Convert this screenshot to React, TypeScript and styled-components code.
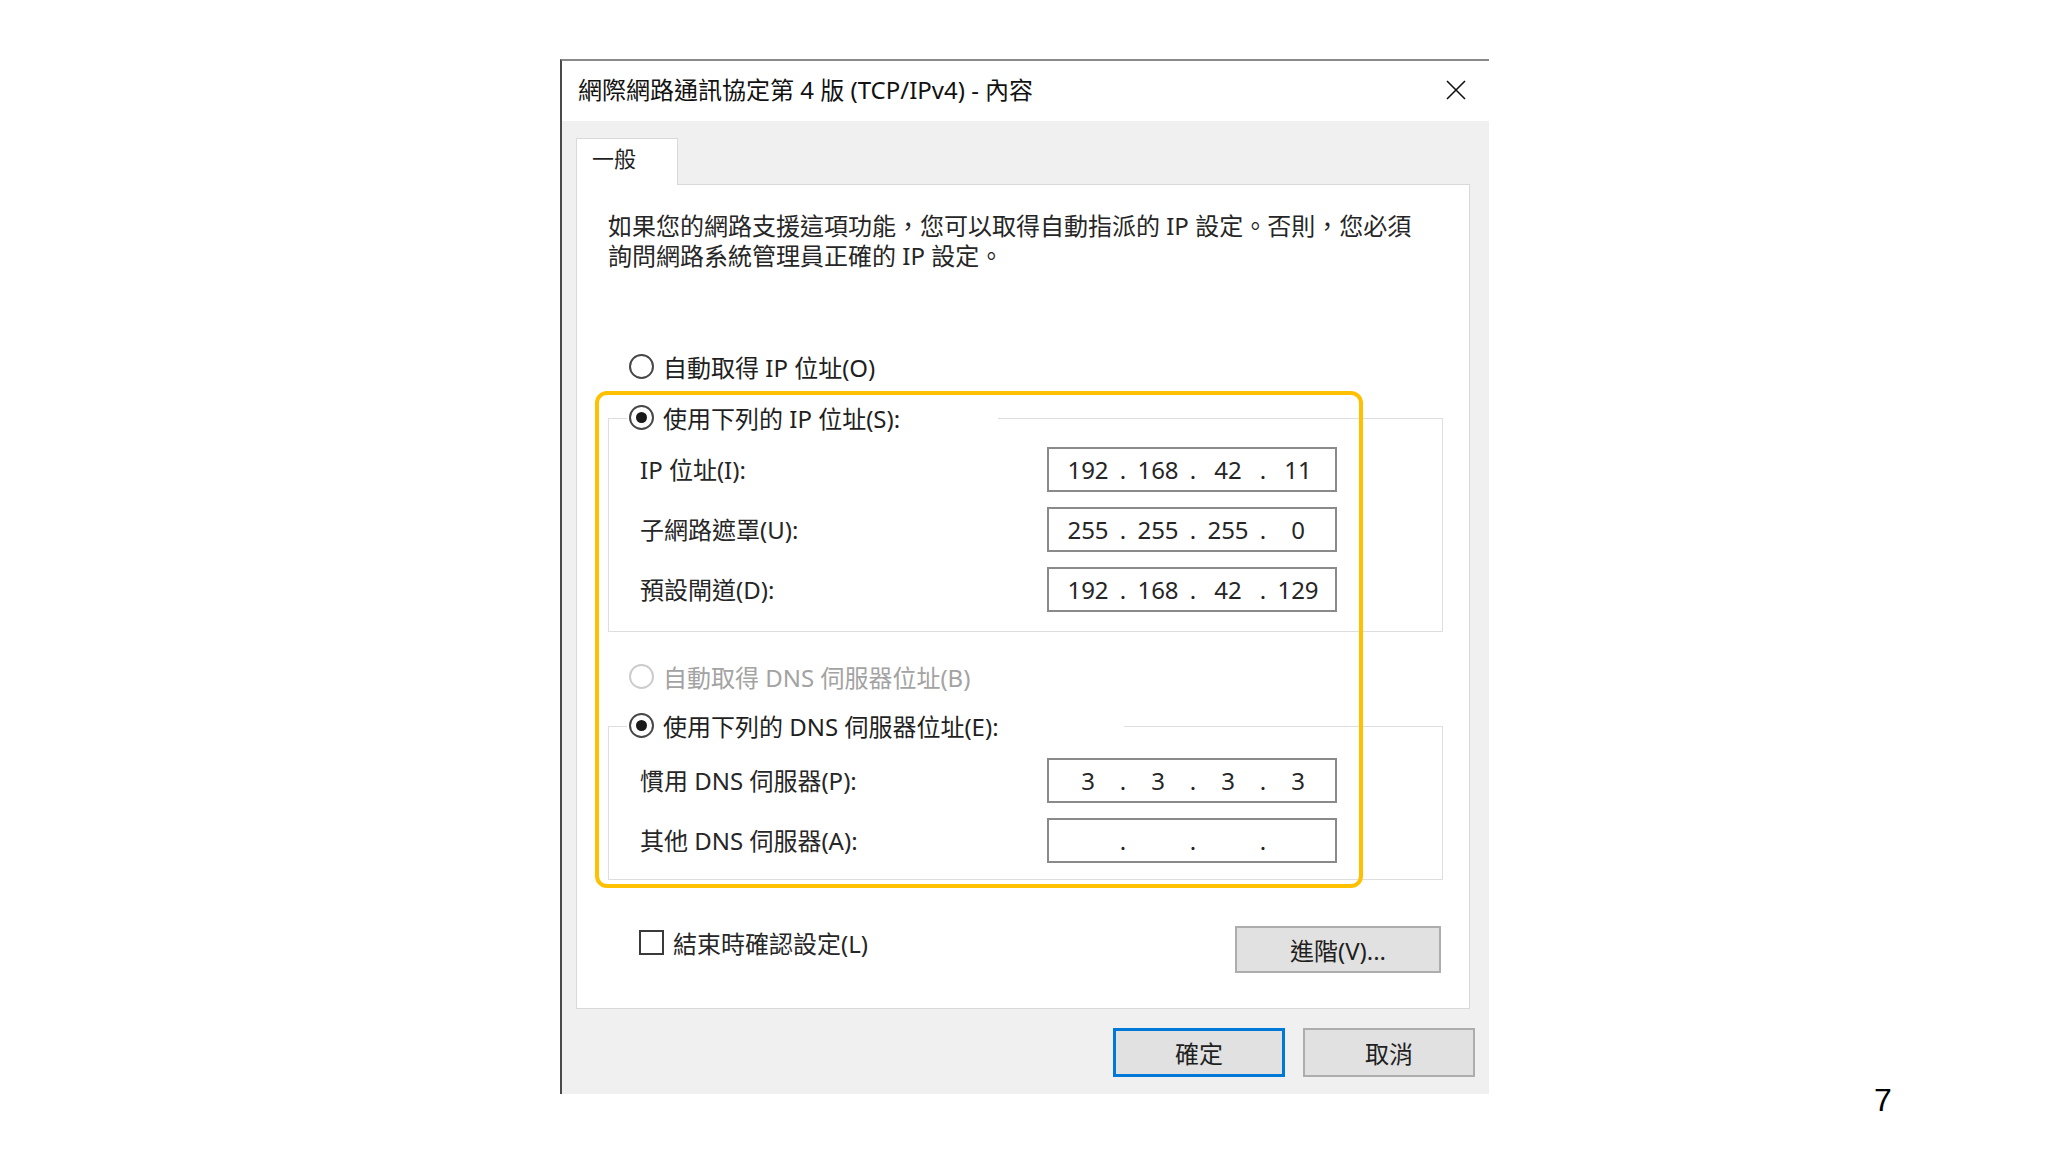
import React from "react";
import styled, { createGlobalStyle } from "styled-components";

const GlobalStyle = createGlobalStyle`
  html, body { margin: 0; padding: 0; background: #ffffff; }
  body { font-family: "Noto Sans", "Noto Sans CJK TC", sans-serif; color: #1f1f1f; }
  * { box-sizing: border-box; }
`;

const Page = styled.div`
  width: 2048px;
  height: 1152px;
  display: flex;
  align-items: flex-start;
  padding: 59px 0 0 560px;
  overflow: hidden;
`;

const Dialog = styled.div`
  width: 929px;
  height: 1035px;
  display: flex;
  flex-direction: column;
  border-top: 2px solid #8a8a8a;
  border-left: 2px solid #4a4a4a;
  background: #f0f0f0;
`;

const TitleBar = styled.div`
  height: 60px;
  flex: none;
  background: #ffffff;
  display: flex;
  align-items: center;
  justify-content: space-between;
  padding: 0 23px 2px 16px;
`;

const Title = styled.div`
  font-size: 24px;
  line-height: 30px;
  color: #111;
`;

const CloseButton = styled.div`
  width: 20px;
  height: 20px;
  display: flex;
`;

const Body = styled.div`
  flex: 1;
  display: flex;
  flex-direction: column;
  padding: 17px 14px 17px 14px;
`;

const TabStrip = styled.div`
  display: flex;
`;

const Tab = styled.div`
  width: 102px;
  height: 47px;
  margin-bottom: -1px;
  background: #ffffff;
  border: 1px solid #d9d9d9;
  border-bottom: none;
  padding: 0 0 10px 15px;
  display: flex;
  align-items: center;
  font-size: 22px;
  color: #1f1f1f;
  position: relative;
  z-index: 1;
`;

const Panel = styled.div`
  flex: 1;
  position: relative;
  background: #ffffff;
  border: 1px solid #d9d9d9;
  margin-right: 5px;
  padding: 26px 0 35px 31px;
  display: flex;
  flex-direction: column;
`;

const Intro = styled.p`
  margin: 0;
  font-size: 24px;
  line-height: 30px;
  color: #262626;
  white-space: nowrap;
`;

const OptionRow = styled.div<{ $top: number; $disabled?: boolean }>`
  display: flex;
  align-items: center;
  gap: 9px;
  height: 30px;
  margin-top: ${(p) => p.$top}px;
  margin-left: 21px;
  font-size: 24px;
  color: ${(p) => (p.$disabled ? "#a3a3a3" : "#1f1f1f")};
`;

const Radio = styled.span<{ $checked?: boolean; $disabled?: boolean }>`
  width: 25px;
  height: 25px;
  flex: none;
  border-radius: 50%;
  border: 2px solid ${(p) => (p.$disabled ? "#cccccc" : "#474747")};
  background: #ffffff;
  display: flex;
  align-items: center;
  justify-content: center;
  &::after {
    content: "";
    width: 11px;
    height: 11px;
    border-radius: 50%;
    background: #1a1a1a;
    display: ${(p) => (p.$checked ? "block" : "none")};
  }
`;

const GroupBox = styled.div<{ $top: number; $bottom: number }>`
  margin-top: ${(p) => p.$top}px;
  margin-right: 26px;
  border: 1px solid #dedede;
  padding: 0 105px ${(p) => p.$bottom}px 31px;
  display: flex;
  flex-direction: column;
`;

const Legend = styled.div<{ $width: number }>`
  width: ${(p) => p.$width}px;
  height: 30px;
  margin-top: -17px;
  margin-left: -13px;
  padding-left: 2px;
  background: #ffffff;
  display: flex;
  align-items: center;
  gap: 9px;
  font-size: 24px;
  color: #1f1f1f;
`;

const FieldGrid = styled.div<{ $top: number }>`
  display: grid;
  grid-template-columns: 1fr 290px;
  row-gap: 15px;
  align-items: center;
  margin-top: ${(p) => p.$top}px;
`;

const FieldLabel = styled.div`
  font-size: 24px;
  line-height: 30px;
  color: #262626;
`;

const IpBox = styled.div`
  height: 45px;
  border: 2px solid #8a8a8a;
  background: #ffffff;
  display: flex;
  align-items: center;
  padding: 0 0 1px 11px;
  font-size: 24px;
  color: #262626;
`;

const Octet = styled.span`
  width: 56px;
  text-align: center;
`;

const Dot = styled.span`
  width: 14px;
  text-align: center;
`;

const BottomRow = styled.div`
  display: flex;
  justify-content: space-between;
  align-items: flex-start;
  margin-top: auto;
  margin-right: 28px;
`;

const CheckRow = styled.label`
  display: flex;
  align-items: center;
  gap: 9px;
  height: 30px;
  margin-top: 1px;
  margin-left: 31px;
  font-size: 24px;
  color: #262626;
`;

const CheckBox = styled.span`
  width: 25px;
  height: 25px;
  border: 2px solid #3a3a3a;
  background: #ffffff;
`;

const Button = styled.div<{ $width: number; $height: number; $default?: boolean }>`
  width: ${(p) => p.$width}px;
  height: ${(p) => p.$height}px;
  background: #e1e1e1;
  border: ${(p) => (p.$default ? "3px solid #0078d7" : "2px solid #adadad")};
  display: flex;
  align-items: center;
  justify-content: center;
  font-size: 24px;
  color: #1f1f1f;
`;

const Footer = styled.div`
  flex: none;
  display: flex;
  justify-content: flex-end;
  gap: 18px;
  margin-top: 19px;
`;

const Highlight = styled.div`
  position: absolute;
  left: 18px;
  top: 206px;
  width: 768px;
  height: 497px;
  border: 4px solid #ffc000;
  border-radius: 12px;
  pointer-events: none;
`;

const PageNumber = styled.div`
  margin-left: 385px;
  margin-top: 1025px;
  font-family: "Liberation Sans", Arial, sans-serif;
  font-size: 32px;
  line-height: 32px;
  color: #000;
`;

const IpField: React.FC<{ parts: string[] }> = ({ parts }) => (
  <IpBox>
    {parts.map((p, i) => (
      <React.Fragment key={i}>
        <Octet>{p}</Octet>
        {i < 3 && <Dot>.</Dot>}
      </React.Fragment>
    ))}
  </IpBox>
);

export default function App() {
  return (
    <>
      <GlobalStyle />
      <Page lang="zh-Hant-TW">
        <Dialog>
          <TitleBar>
            <Title>網際網路通訊協定第 4 版 (TCP/IPv4) - 內容</Title>
            <CloseButton>
              <svg width="20" height="20" viewBox="0 0 20 20">
                <path d="M1 1 L19 19 M19 1 L1 19" stroke="#111" strokeWidth="1.6" fill="none" />
              </svg>
            </CloseButton>
          </TitleBar>
          <Body>
            <TabStrip>
              <Tab>一般</Tab>
            </TabStrip>
            <Panel>
              <Intro>
                如果您的網路支援這項功能，您可以取得自動指派的 IP 設定。否則，您必須
                <br />
                詢問網路系統管理員正確的 IP 設定。
              </Intro>

              <OptionRow $top={80}>
                <Radio />
                <span>自動取得 IP 位址(O)</span>
              </OptionRow>

              <GroupBox $top={37} $bottom={19}>
                <Legend $width={371}>
                  <Radio $checked />
                  <span>使用下列的 IP 位址(S):</span>
                </Legend>
                <FieldGrid $top={15}>
                  <FieldLabel>IP 位址(I):</FieldLabel>
                  <IpField parts={["192", "168", "42", "11"]} />
                  <FieldLabel>子網路遮罩(U):</FieldLabel>
                  <IpField parts={["255", "255", "255", "0"]} />
                  <FieldLabel>預設閘道(D):</FieldLabel>
                  <IpField parts={["192", "168", "42", "129"]} />
                </FieldGrid>
              </GroupBox>

              <OptionRow $top={29} $disabled>
                <Radio $disabled />
                <span>自動取得 DNS 伺服器位址(B)</span>
              </OptionRow>

              <GroupBox $top={35} $bottom={16}>
                <Legend $width={497}>
                  <Radio $checked />
                  <span>使用下列的 DNS 伺服器位址(E):</span>
                </Legend>
                <FieldGrid $top={18}>
                  <FieldLabel>慣用 DNS 伺服器(P):</FieldLabel>
                  <IpField parts={["3", "3", "3", "3"]} />
                  <FieldLabel>其他 DNS 伺服器(A):</FieldLabel>
                  <IpField parts={["", "", "", ""]} />
                </FieldGrid>
              </GroupBox>

              <BottomRow>
                <CheckRow>
                  <CheckBox />
                  <span>結束時確認設定(L)</span>
                </CheckRow>
                <Button $width={206} $height={47}>進階(V)...</Button>
              </BottomRow>

              <Highlight />
            </Panel>
            <Footer>
              <Button $width={172} $height={49} $default>確定</Button>
              <Button $width={172} $height={49}>取消</Button>
            </Footer>
          </Body>
        </Dialog>
        <PageNumber>7</PageNumber>
      </Page>
    </>
  );
}
